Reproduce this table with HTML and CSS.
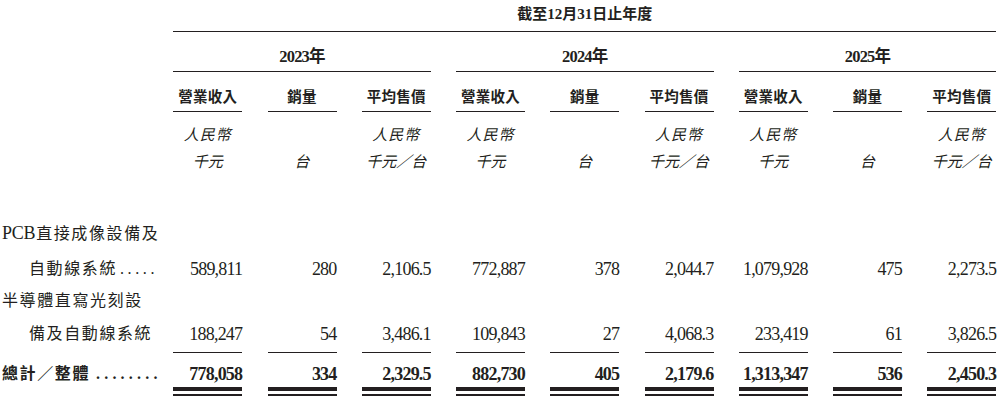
FILE: index.html
```html
<!DOCTYPE html>
<html lang="zh-Hant">
<head>
<meta charset="utf-8">
<link rel="stylesheet" href="styles.css">
</head>
<body>
<div class="tbl">
  <div class="row r-title">
    <div class="lab"></div>
    <div class="title">截至12月31日止年度</div>
  </div>
  <div class="row r-year">
    <div class="lab"></div>
    <div class="year">2023年</div>
    <div class="year">2024年</div>
    <div class="year">2025年</div>
  </div>
  <div class="row r-head">
    <div class="lab"></div>
    <div class="h">營業收入</div><div class="h">銷量</div><div class="h">平均售價</div>
    <div class="h">營業收入</div><div class="h">銷量</div><div class="h">平均售價</div>
    <div class="h">營業收入</div><div class="h">銷量</div><div class="h">平均售價</div>
  </div>
  <div class="row r-unit1">
    <div class="lab"></div>
    <div class="u">人民幣</div><div class="u"></div><div class="u">人民幣</div>
    <div class="u">人民幣</div><div class="u"></div><div class="u">人民幣</div>
    <div class="u">人民幣</div><div class="u"></div><div class="u">人民幣</div>
  </div>
  <div class="row r-unit2">
    <div class="lab"></div>
    <div class="u">千元</div><div class="u">台</div><div class="u">千元／台</div>
    <div class="u">千元</div><div class="u">台</div><div class="u">千元／台</div>
    <div class="u">千元</div><div class="u">台</div><div class="u">千元／台</div>
  </div>
  <div class="row r-l1">
    <div class="lab full"><span class="latin">PCB</span>直接成像設備及</div>
  </div>
  <div class="row r-d1">
    <div class="lab ind">自動線系統<span class="dots">.....</span></div>
    <div class="n">589,811</div><div class="n">280</div><div class="n">2,106.5</div>
    <div class="n">772,887</div><div class="n">378</div><div class="n">2,044.7</div>
    <div class="n">1,079,928</div><div class="n">475</div><div class="n">2,273.5</div>
  </div>
  <div class="row r-l2">
    <div class="lab full">半導體直寫光刻設</div>
  </div>
  <div class="row r-d2">
    <div class="lab ind">備及自動線系統</div>
    <div class="n">188,247</div><div class="n">54</div><div class="n">3,486.1</div>
    <div class="n">109,843</div><div class="n">27</div><div class="n">4,068.3</div>
    <div class="n">233,419</div><div class="n">61</div><div class="n">3,826.5</div>
  </div>
  <div class="row r-tot">
    <div class="lab">總計／整體<span class="dots tdots">........</span></div>
    <div class="n"><span>778,058</span></div><div class="n"><span>334</span></div><div class="n"><span>2,329.5</span></div>
    <div class="n"><span>882,730</span></div><div class="n"><span>405</span></div><div class="n"><span>2,179.6</span></div>
    <div class="n"><span>1,313,347</span></div><div class="n"><span>536</span></div><div class="n"><span>2,450.3</span></div>
  </div>
</div>
</body>
</html>
```
FILE: styles.css
```css
html, body {
  margin: 0;
  padding: 0;
  background: #ffffff;
}
body {
  width: 1000px;
  height: 400px;
  overflow: hidden;
  color: #231f20;
  font-family: "Liberation Serif", "Noto Sans CJK TC", serif;
}
.tbl {
  display: grid;
  grid-template-columns: 148px repeat(9, 69px);
  column-gap: 25.25px;
  line-height: 20px;
}
.row { display: contents; }
.row > div { white-space: nowrap; }

.lab {
  font-size: 16px;
  letter-spacing: 1.6px;
  padding-left: 2px;
}
.lab.full { grid-column: 1 / -1; }
.lab.ind { padding-left: 29px; }
.latin {
  font-size: 18px;
  letter-spacing: -0.3px;
  margin-right: 1px;
}
.dots {
  letter-spacing: 3.6px;
  margin-left: 3px;
}
.tdots {
  letter-spacing: 4.2px;
  margin-left: 6px;
}

/* title row */
.r-title > div { padding: 4px 0 7px; }
.title {
  grid-column: 2 / -1;
  text-align: center;
  font-weight: bold;
  font-size: 15px;
  border-bottom: 1px solid #231f20;
}

/* years */
.r-year > div { padding: 15px 0 4px; }
.year {
  grid-column: span 3;
  text-align: center;
  font-weight: bold;
  font-size: 16.5px;
  letter-spacing: -0.8px;
  border-bottom: 1px solid #231f20;
}

/* column heads */
.r-head > div { padding: 15px 0 4px; }
.h {
  text-align: center;
  font-weight: bold;
  font-size: 14.5px;
  letter-spacing: 0.3px;
  border-bottom: 1px solid #231f20;
}

/* units */
.u {
  text-align: center;
  font-style: italic;
  font-size: 15px;
  font-weight: 400;
}
.r-unit1 > div { padding-top: 13px; }
.r-unit1 .u { letter-spacing: 1px; }
.r-unit2 > div { padding-top: 7px; }

/* data rows */
.r-l1 > div { padding-top: 51px; }
.r-d1 > div { padding-top: 15px; }
.r-l2 > div { padding-top: 12px; }
.r-d2 > div { padding-top: 13px; padding-bottom: 8px; }
.r-d2 .n { border-bottom: 1px solid #231f20; }

.n {
  text-align: right;
  font-size: 18px;
  letter-spacing: -0.8px;
}

/* total row */
.r-tot > div { padding-top: 11px; }
.r-tot .lab { font-weight: bold; }
.r-tot .n {
  font-weight: bold;
  padding-bottom: 3px;
  border-bottom: 2px solid #231f20;
}
.r-tot .n span {
  display: block;
  padding-bottom: 3px;
  border-bottom: 4px solid #231f20;
}
```
